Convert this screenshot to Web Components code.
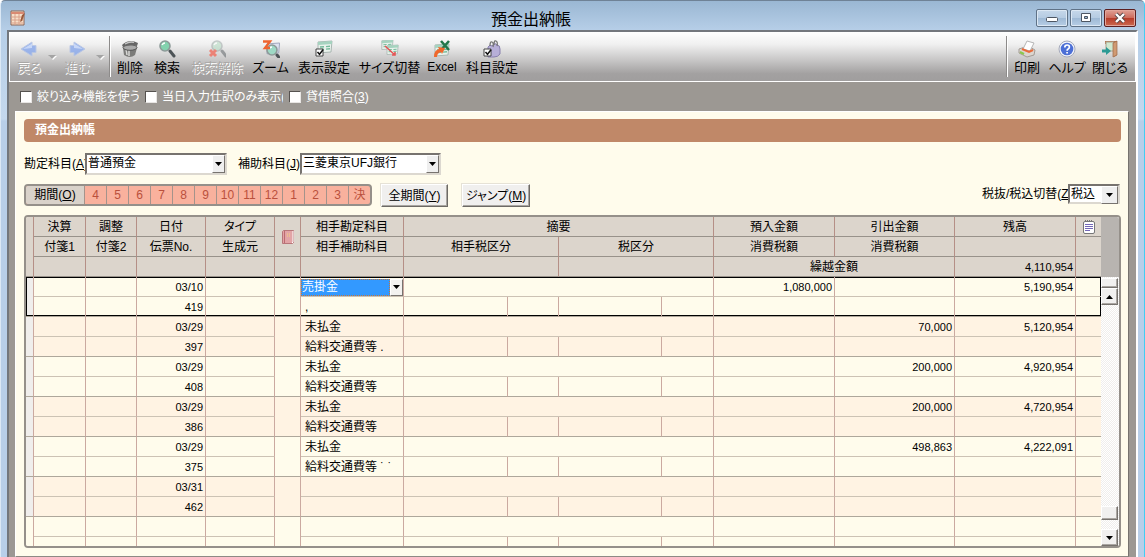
<!DOCTYPE html>
<html lang="ja">
<head>
<meta charset="utf-8">
<title>預金出納帳</title>
<style>
  html, body { margin: 0; height: 100%; }
  body { font: 12px/16px "Liberation Sans", "Noto Sans CJK JP", sans-serif; font-feature-settings: "palt"; color: #000; overflow: hidden; }
</style>
</head>
<body>
<app-window>
  <title-bar slot="title" caption="預金出納帳"></title-bar>
  <tool-bar slot="tools">
    <tool-button icon="back" label="戻る" style="--w:24px" menu disabled></tool-button>
    <tool-button icon="forward" label="進む" style="--w:24px" menu disabled></tool-button>
    <tool-divider></tool-divider>
    <tool-button icon="trash" label="削除" style="--w:26px"></tool-button>
    <tool-button icon="search" label="検索" style="--w:26px"></tool-button>
    <tool-button icon="unsearch" label="検索解除" style="--w:52px" disabled></tool-button>
    <tool-button icon="zoom" label="ズーム" style="--w:33px"></tool-button>
    <tool-button icon="view" label="表示設定" style="--w:52px"></tool-button>
    <tool-button icon="size" label="サイズ切替" style="--w:57px"></tool-button>
    <tool-button icon="excel" label="Excel" style="--w:26px"></tool-button>
    <tool-button icon="account" label="科目設定" style="--w:52px"></tool-button>
    <tool-divider slot="end"></tool-divider>
    <tool-button slot="end" icon="print" label="印刷" style="--w:26px"></tool-button>
    <tool-button slot="end" icon="help" label="ヘルプ" style="--w:32px"></tool-button>
    <tool-button slot="end" icon="close" label="閉じる" style="--w:32px"></tool-button>
  </tool-bar>
  <option-check slot="options" style="--w:102px">絞り込み機能を使う(<u>1</u>)</option-check>
  <option-check slot="options" style="--w:121px">当日入力仕訳のみ表示(<u>2</u>)</option-check>
  <option-check slot="options" style="--w:70px">貸借照合(<u>3</u>)</option-check>
  <ledger-panel caption="預金出納帳"></ledger-panel>
</app-window>

<script>
const define = (name, html, setup) => {
  const template = document.createElement('template');
  template.innerHTML = html;
  customElements.define(name, class extends HTMLElement {
    constructor() {
      super();
      this.attachShadow({ mode: 'open' }).append(template.content.cloneNode(true));
    }
    connectedCallback() { if (setup) setup(this, this.shadowRoot); }
  });
};

const glass = (x, y, c) => `<path d="M${x + 5} ${y + 5}l4 5" stroke="#4c5356" stroke-width="3" stroke-linecap="round"/><circle cx="${x}" cy="${y}" r="5" fill="${c}" stroke="#8d9a98" stroke-width="1.6"/><path d="M${x - 3} ${y - 1}q1-2 3-2" stroke="#fff" stroke-width="1.3" fill="none"/>`;
const tick = '<path d="M1 9h7v7H1z" fill="#fff" stroke="#444"/><path d="M2.5 12l2 2.300 3.500-4.500" fill="none" stroke="#111" stroke-width="1.500"/>';
const sheet = (x, y) => `<g transform="translate(${x} ${y})"><path d="M0 1l14-1-1 11-13 1z" fill="#e9f2ec" stroke="#a9b6b2"/><path d="M0 1l14-1v3l-14 1z" fill="#a5d3bf"/><path d="M2 6l4-.3M8 5.600l4-.3M2 8.500l4-.3M8 8.100l4-.3" stroke="#74bb9b" stroke-width="1.400"/></g>`;
const icons = {
  back: '<path d="M1 9l11-7v3.500h4v7h-4V16z" fill="#8eacec" stroke="#b4c3e4"/><path d="M3 9l9-5.500V8z" fill="#c3d5fa"/>',
  forward: '<path d="M17 9L6 2v3.500H2v7h4V16z" fill="#8eacec" stroke="#b4c3e4"/><path d="M15 9L6 3.500V8z" fill="#c3d5fa"/>',
  trash: '<path d="M2 8l1 7q6 4 11 0l2-7z" fill="#7c7c7a"/><path d="M5 9l1 6M8 10v6" stroke="#d8d8d6" stroke-width="1.500"/><ellipse cx="9" cy="7.500" rx="7" ry="2.800" fill="#aaa" stroke="#555"/><path d="M1 5q7-7 16-2l-1 3q-7-2-14 1z" fill="#666"/><path d="M4 4q5-3 9-1.500" stroke="#c8c8c8" stroke-width="1.300" fill="none"/>',
  search: glass(7, 6, '#83d2ae'),
  unsearch: `<g opacity=".55">${glass(9, 6, '#a8d8b8')}</g><path d="M2 10l6 6M8 10l-6 6" stroke="#ef7466" stroke-width="3"/>`,
  zoom: `<g transform="translate(5 3) scale(.9)"><path d="M0 1l14-1-1 11-13 1z" fill="#dfe2f0" stroke="#9aa0b8"/></g>${glass(10, 10, '#9ed9c5')}<path d="M1 1.500h7l-5 6.500h5" stroke="#ee642f" stroke-width="2.400" fill="none"/>`,
  view: sheet(3, 1) + tick,
  size: `<g transform="translate(0 0) scale(.8)">${sheet(1, 0)}</g><g transform="translate(6 5) scale(.8)">${sheet(0, 0)}</g><path d="M4 6l10 9M14 12v3h-3" stroke="#e45656" stroke-width="1.600" fill="none"/>`,
  excel: `${sheet(2, 4)}<path d="M8 1l8 9M16 1l-8 9" stroke="#22774b" stroke-width="2.600"/><path d="M1 17q0-7 5-8l-1-2 7 1-3 6-1-2q-4 1-4 5z" fill="#f0672b"/>`,
  account: `<path d="M5 7q2-3 4-1 3-4 5-1 3 0 3 4v5q-2 3-6 3H5z" fill="#b7afd8" stroke="#8880ae"/><path d="M7 6q0-5 2-4t1 5M11 5q0-5 2-4t1 5" fill="none" stroke="#777" stroke-width="1.300"/>${tick}`,
  print: '<path d="M1 9l9-3 7 4-1 5-7 2-8-4z" fill="#dcd6d0" stroke="#a39b94"/><path d="M5 9l4-8 7 2-4 8z" fill="#fff" stroke="#b5b5b5"/><path d="M4 9l7 3 4-2" fill="none" stroke="#ea6a3a" stroke-width="2"/><path d="M2 12l4 2" stroke="#8cc84b" stroke-width="2"/>',
  help: '<circle cx="9" cy="9" r="8" fill="#f2f4fa" stroke="#a5aabb"/><circle cx="9" cy="9" r="6.300" fill="#4c6fd6"/><path d="M6.800 7.500q0-2.500 2.300-2.500t2.300 2q0 1.200-1.300 1.900-1 .5-1 1.800M9.100 12v1.600" fill="none" stroke="#fff" stroke-width="1.700"/>',
  close: '<path d="M4 1l12 0v14l-3 2V4L4 4z" fill="#b57a55"/><path d="M5 2h8v9H5z" fill="#cfe9d0" stroke="#a9a08c"/><path d="M12 3l4-2v14l-4 2z" fill="#d09a72" stroke="#9c6748" stroke-width=".700"/><path d="M1 9.500h4V7l5 4-5 4v-2.500H1z" fill="#2c9a94"/>',
};
const svg = (body, size = 18) => `<svg width="${size}" height="${size}" viewBox="0 0 18 18" fill="none" aria-hidden="true">${body}</svg>`;

define('app-window', `
<style>
  :host { display: flex; flex-direction: column; box-sizing: border-box; height: 100vh; padding: 0 6px; border: solid; border-width: 1px 1px 0; border-color: #6f8296 #42cdf3 #fff #dbe8f5;
    background: linear-gradient(#9ab7d3, #b7cfe8 30px, #c4d8ee 118px, #b8cfe9 120px); border-radius: 5px 5px 0 0; }
  main { display: flex; flex-direction: column; flex: 1; min-height: 0; border: solid; border-width: 2px 2px 0; border-color: #73777d #fff #fff #73777d; background: #9c9893; }
  .options { display: flex; gap: 6px; height: 29px; align-items: center; padding-left: 11px; color: #fff; }
</style>
<slot name="title"></slot>
<main>
  <slot name="tools"></slot>
  <div class="options"><slot name="options"></slot></div>
  <slot></slot>
</main>`);

define('title-bar', `
<style>
  :host { display: grid; grid-template-columns: 19px 1fr 102px; align-items: center; height: 29px; flex: none; }
  svg { margin-top: 5px; margin-left: 3px; }
  h1 { margin: 4px 0 0; font: 16px/22px "Noto Sans CJK JP", sans-serif; text-align: center; }
  nav { display: flex; gap: 2px; margin-top: 5px; }
  button { width: 32px; height: 18px; padding: 0; display: grid; place-items: center; border: 1px solid #5f7287; border-radius: 2px; background: linear-gradient(#c6d8ea, #b5cbe2 50%, #9db8d4 50%, #b7cee6); box-shadow: inset 0 0 0 1px #dce8f4; }
  button svg { margin: 0; }
  .x { border-color: #5c1f20; background: linear-gradient(#dfa095, #cd6a5b 50%, #b63a28 50%, #cc6a50); box-shadow: inset 0 0 0 1px #e3a69b; }
</style>
<svg width="16" height="16" viewBox="0 0 16 16" aria-hidden="true"><path d="M1 1h13v14H1z" fill="#f7dfc9" stroke="#8b6656"/><path d="M1 2h13v2H1z" fill="#d98a72"/><path d="M1 7h13M1 10h13M1 13h13M5 4v11M9 4v11" stroke="#d9a18a"/><path d="M12 5l3-2-3 8-2 1z" fill="#9b5a3b"/></svg>
<h1></h1>
<nav>
  <button aria-label="最小化"><svg width="14" height="12"><rect x="1.500" y="5.500" width="11" height="4" rx="1" fill="#fff" stroke="#4d5663"/></svg></button>
  <button aria-label="最大化"><svg width="14" height="12"><path d="M2.500 1.500h9v8h-9z" fill="#fff" stroke="#4d5663"/><path d="M5.500 4.500h3v2h-3z" fill="#9db8d4" stroke="#4d5663"/></svg></button>
  <button class="x" aria-label="閉じる"><svg width="14" height="12"><path d="M3 2l8 8M11 2l-8 8" stroke="#544" stroke-width="4"/><path d="M3 2l8 8M11 2l-8 8" stroke="#fff" stroke-width="2.400"/></svg></button>
</nav>`, (host, root) => { root.querySelector('h1').textContent = host.getAttribute('caption'); });

define('tool-bar', `
<style>
  :host { display: flex; justify-content: space-between; flex: none; height: 50px; box-sizing: border-box; padding: 0 9px 0 7px; border: 1px solid #fff; border-top: 0;
    background: linear-gradient(#fff, #f0f0f0 25%, #c4c3c3 60%, #a3a1a1 85%, #a09e9e); }
  div { display: flex; gap: 11px; }
</style>
<div><slot></slot></div><div><slot name="end"></slot></div>`);

define('tool-divider', `
<style>:host { display: block; width: 1px; margin: 4px -5px 4px -4px; border-left: 1px solid #8d8b8a; background: #fff; }</style>`);

define('tool-button', `
<style>
  :host { display: flex; }
  button { display: flex; flex-direction: column; align-items: center; width: var(--w); height: 48px; padding: 8px 0 0; border: 0; background: none; font: 13px/18px "Noto Sans CJK JP", sans-serif; font-feature-settings: "palt"; color: #000; white-space: nowrap; }
  :host([icon="excel"]) span { font: 12px/18px "Liberation Sans", sans-serif; }
  svg { display: block; flex: none; }
  :host([disabled]) span { color: #a9a7a5; text-shadow: 1px 1px #fff; }
  :host([disabled]) svg { opacity: .85; }
  i { display: none; }
  :host([menu]) i { display: block; width: 0; height: 0; margin: 23px -2px 0 7px; border: 4px solid transparent; border-top: 4px solid #a4a4a4; filter: drop-shadow(1px 1px 0 #fff); }
</style>
<button><span></span></button><i></i>`, (host, root) => {
  const button = root.querySelector('button');
  button.insertAdjacentHTML('afterbegin', svg(icons[host.getAttribute('icon')]));
  button.disabled = host.hasAttribute('disabled');
  root.querySelector('span').textContent = host.getAttribute('label');
});

define('option-check', `
<style>
  :host { display: block; }
  label { display: flex; align-items: center; gap: 5px; }
  input { appearance: none; width: 12px; height: 12px; margin: 0; background: #fff; border: 1px solid; border-color: #55524f #e8e6e4 #e8e6e4 #55524f; }
  span { width: var(--w); overflow: hidden; white-space: nowrap; }
</style>
<label><input type="checkbox"><span><slot></slot></span></label>`);

define('combo-field', `
<style>
  :host { display: flex; align-items: center; }
  label { flex: none; width: var(--lw); overflow: hidden; white-space: nowrap; }
  .box { display: grid; width: var(--w); height: var(--h, 22px); box-sizing: border-box; background: #fff; border: 2px solid; border-color: #77736f #dcd8d0 #dcd8d0 #77736f; }
  select, .arrow { grid-area: 1 / 1; }
  select { appearance: none; width: 100%; border: 0; margin: 0; padding: 0 0 2px 1px; background: none; font: inherit; font-feature-settings: inherit; color: inherit; outline: 0; }
  .arrow { justify-self: end; width: var(--aw, 13px); box-sizing: border-box; display: grid; place-items: center; pointer-events: none; background: #efefef; border: 1px solid; border-color: #fff #77736f #77736f #fff; }
</style>
<label for="s"><slot></slot></label>
<div class="box"><select id="s"><option></option></select>
<span class="arrow"><svg width="7" height="4"><path d="M0 0h7L3.500 4z"/></svg></span></div>`,
(host, root) => { root.querySelector('option').textContent = host.getAttribute('value'); });

define('push-button', `
<style>
  :host { display: block; width: var(--w); }
  button { width: 100%; height: 23px; padding: 0; background: #f0efee; border: 1px solid; border-color: #fff #6d6a66 #6d6a66 #fff; box-shadow: inset -1px -1px #a9a6a1, -1px -1px #e6e2d6; font: inherit; font-feature-settings: inherit; color: inherit; }
</style>
<button><slot></slot></button>`);

define('period-bar', `
<style>
  :host { display: flex; box-sizing: border-box; height: 22px; border: 2px solid #95908a; border-radius: 4px; overflow: hidden; background: #f9b19d; }
  button { width: 22px; padding: 0; border: 0; border-left: 1px solid #a5938b; background: none; font: inherit; font-feature-settings: inherit; color: #b9503c; }
  .all { width: 58px; border: 0; background: #d9d2ca; color: #000; }
</style>
<button class="all">期間(<u>O</u>)</button>`, (host, root) => {
  for (const m of [4, 5, 6, 7, 8, 9, 10, 11, 12, 1, 2, 3, '決']) {
    const b = document.createElement('button');
    b.textContent = m;
    root.append(b);
  }
});

define('ledger-panel', `
<style>
  :host { display: flex; flex-direction: column; flex: 1; min-height: 0; margin: 0 7px 0 6px; padding: 7px 7px 8px 8px; background: #fffcec; border: 1px solid; border-color: #fff #77736f #8d8984 #fff; }
  h2 { flex: none; margin: 0; padding-left: 11px; font-size: 12px; line-height: 23px; color: #fff; background: #c08868; border-radius: 4px; }
  .row { display: flex; flex: none; }
  .accounts { gap: 11px; margin-top: 11px; }
  .periods { margin-top: 9px; height: 31px; align-items: flex-start; }
  .all { margin-left: 9px; }
  .jump { margin-left: 14px; }
  .tax { margin-left: auto; margin-right: 1px; }
  ledger-grid { flex: 1; min-height: 0; }
</style>
<h2></h2>
<div class="row accounts">
  <combo-field value="普通預金" style="--lw:61px;--w:142px">勘定科目(<u>A</u>):</combo-field>
  <combo-field value="三菱東京UFJ銀行" style="--lw:62px;--w:141px">補助科目(<u>J</u>):</combo-field>
</div>
<div class="row periods">
  <period-bar></period-bar>
  <push-button class="all" style="--w:67px">全期間(<u>Y</u>)</push-button>
  <push-button class="jump" style="--w:68px">ジャンプ(<u>M</u>)</push-button>
  <combo-field class="tax" value="税込" style="--lw:86px;--w:52px;--h:20px;--aw:17px">税抜/税込切替(<u>Z</u>)</combo-field>
</div>
<ledger-grid></ledger-grid>`, (host, root) => { root.querySelector('h2').textContent = host.getAttribute('caption'); });

define('scroll-rail', `
<style>
  :host { display: flex; flex-direction: column; width: 18px; flex: none; box-sizing: border-box; padding-top: 61px; background: linear-gradient(#b8b4b0 60px, transparent 60px), repeating-conic-gradient(#f0eeec 0 25%, #fff 0 50%) 0 0 / 2px 2px; }
  button { display: grid; place-items: center; width: 17px; height: 17px; padding: 0; background: #f1f0ef; border: 1px solid; border-color: #fff #77736f #77736f #fff; box-shadow: inset -1px -1px #aaa6a2; }
  .split { height: 10px; }
  .thumb { height: 14px; margin-top: auto; margin-bottom: 9px; }
</style>
<button class="split" aria-label="分割"></button>
<button aria-label="上へ"><svg width="7" height="4"><path d="M0 4h7L3.500 0z"/></svg></button>
<button class="thumb" aria-label="つまみ"></button>
<button aria-label="下へ"><svg width="7" height="4"><path d="M0 0h7L3.500 4z"/></svg></button>`);

const records = [
  ['03/10', '419', '売掛金', ',', '1,080,000', '', '5,190,954'],
  ['03/29', '397', '未払金', '給料交通費等 .', '', '70,000', '5,120,954'],
  ['03/29', '408', '未払金', '給料交通費等', '', '200,000', '4,920,954'],
  ['03/29', '386', '未払金', '給料交通費等', '', '200,000', '4,720,954'],
  ['03/29', '375', '未払金', '給料交通費等 ˙ ˙', '', '498,863', '4,222,091'],
  ['03/31', '462', '', '', '', '', ''],
  ['', '', '', '', '', '', ''],
];
const picker = v => `<div class="pick"><select aria-label="相手勘定科目"><option>${v}</option></select><span><svg width="7" height="4"><path d="M0 0h7L3.500 4z"/></svg></span></div>`;
const body = records.map(([date, no, acc, sub, dep, wd, bal], i) => `
<tbody class="${i === 0 ? 'current' : ''}${i === 6 ? ' blank' : ''}">
<tr><td class="sel" rowspan="2"></td><td></td><td></td><td class="n">${date}</td><td></td><td class="mark" rowspan="2"></td><td class="${i ? 't' : 'edit'}">${i ? acc : picker(acc)}</td><td colspan="4"></td><td class="n">${dep}</td><td class="n">${wd}</td><td class="n">${bal}</td><td></td></tr>
<tr><td></td><td></td><td class="n">${no}</td><td></td><td class="t">${sub}</td><td></td><td></td><td></td><td></td><td></td><td></td><td></td><td></td></tr>
</tbody>`).join('');

define('ledger-grid', `
<style>
  :host { display: flex; box-sizing: border-box; border: 2px solid #95908a; border-radius: 4px; overflow: hidden; background: #fffcec; }
  .view { flex: 1; min-width: 0; overflow: hidden; }
  table { width: 100%; table-layout: fixed; border-collapse: separate; border-spacing: 0; }
  th, td { box-sizing: border-box; height: 20px; padding: 0; font-weight: normal; line-height: 18px; border-right: 1px solid #cba9a0; border-bottom: 1px solid #ccc2b4; white-space: nowrap; overflow: hidden; }
  th, .carry td { background: #dcd5cc; border-right-color: #b58f86; border-bottom-color: #98928a; text-align: center; }
  tbody tr:nth-child(2) td, td.sel, td.mark { border-bottom-color: #aea79b; }
  tbody:nth-of-type(even) td { background: #fff3e3; }
  tbody td.sel { background: #f0eeec; }
  .blank td.sel { background: #fffcec; }
  td:last-child, th:last-child { border-right-color: transparent; }
  .n, .carry td.n { text-align: right; padding-right: 2px; font: 11px/18px "Liberation Sans", sans-serif; }
  .t { padding-left: 4px; }
  .current tr:first-child td { box-shadow: inset 0 1px #000; }
  .current tr:last-child td { box-shadow: inset 0 -1px #000; }
  .current tr:first-child td.mark { box-shadow: inset 0 1px #000, inset 0 -1px #000; }
  .current tr:first-child td.sel { box-shadow: inset 0 1px #000, inset 0 -1px #000, inset 1px 0 #000; }
  .current tr:first-child td:last-child { box-shadow: inset 0 1px #000, inset -1px 0 #000; }
  .current tr:last-child td:last-child { box-shadow: inset 0 -1px #000, inset -1px 0 #000; }
  .pick { display: flex; height: 17px; margin-top: 1px; }
  .pick select { appearance: none; flex: 1; min-width: 0; box-sizing: border-box; height: 17px; margin: 0; padding: 0; border: 1px dotted #c4763a; border-radius: 0; background: #3399ff; color: #fff; font: inherit; line-height: 15px; }
  .pick span { width: 13px; box-sizing: border-box; display: grid; place-items: center; background: #f3f2f0; border: 1px solid; border-color: #fff #77736f #77736f #fff; }
  th svg { display: block; margin: auto; }
</style>
<div class="view"><table>
<colgroup>${[8, 52, 51, 69, 69, 26, 103, 104, 51, 103, 52, 121, 120, 121, 26].map(w => `<col style="width:${w}px">`).join('')}</colgroup>
<thead>
<tr><th rowspan="3"></th><th>決算</th><th>調整</th><th>日付</th><th>タイプ</th>
<th rowspan="2"><svg width="14" height="14" viewBox="0 0 14 14" role="img" aria-label="帳"><path d="M1.500 1.500l1-1h10v12l-1 1h-10z" fill="#e2a4a6" stroke="#b8767a"/><path d="M12 1v11l-1 1" stroke="#fff" fill="none"/><path d="M3.500 1v12" stroke="#bb6a70"/><path d="M6 4h4M6 6h4" stroke="#f6d37c" stroke-dasharray="1 1"/></svg></th>
<th>相手勘定科目</th><th colspan="4">摘要</th><th>預入金額</th><th>引出金額</th><th>残高</th>
<th><svg width="12" height="14" viewBox="0 0 12 14" role="img" aria-label="メモ"><rect x=".500" y="1.500" width="11" height="12" rx="1.500" fill="#fff" stroke="#777"/><path d="M2 1h8" stroke="#777" stroke-width="2" stroke-dasharray="1 1"/><path d="M2 4.500h8M2 6.500h8M2 8.500h8M2 10.500h5" stroke="#7468b8"/></svg></th></tr>
<tr><th>付箋1</th><th>付箋2</th><th>伝票No.</th><th>生成元</th><th>相手補助科目</th><th colspan="2">相手税区分</th><th colspan="2">税区分</th><th>消費税額</th><th>消費税額</th><th></th><th></th></tr>
<tr class="carry"><td></td><td></td><td></td><td></td><td></td><td></td><td colspan="2"></td><td colspan="2"></td><th colspan="2">繰越金額</th><td class="n">4,110,954</td><td></td></tr>
</thead>${body}
</table></div>
<scroll-rail></scroll-rail>`);
</script>
</body>
</html>
